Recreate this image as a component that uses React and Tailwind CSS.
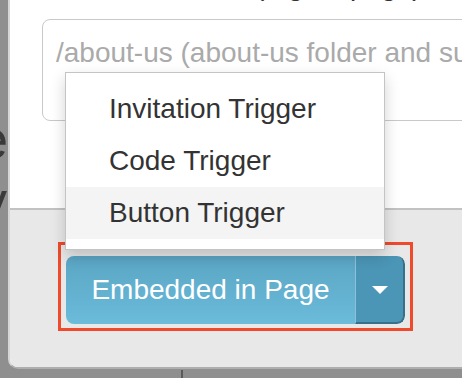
const ITEMS = ["Invitation Trigger", "Code Trigger", "Button Trigger"];

export default function App() {
  const font = { fontFamily: '"Liberation Sans", Arial, sans-serif' };

  return (
    <div
      className="relative w-[462px] h-[378px] overflow-hidden bg-[#8f8f8f]"
      style={font}
    >
      {/* page text showing behind the overlay */}
      <span className="absolute left-[-22px] top-[109px] text-[54px] leading-[60px] text-[#3a3a3a]">
        e
      </span>
      <span className="absolute left-[-20px] top-[170px] text-[54px] leading-[60px] text-[#3a3a3a]">
        y
      </span>
      <div className="absolute left-[181px] top-[370px] w-[2px] h-[8px] bg-[#5a5a5a]" />

      {/* Modal */}
      <div className="ml-[8px] w-[520px] h-[369px] flex flex-col bg-white border-l-2 border-b-2 border-l-[#d6d6d6] border-b-[#aeaeae] rounded-bl-[10px] overflow-hidden">
        <div className="h-[208px] shrink-0 bg-white">
          <div className="mt-[-28px] h-[28px] pl-[245px] text-[28px] leading-[28px] text-[#333] whitespace-nowrap">
            (e.g. to page)
          </div>
          <div className="mt-[19px] ml-[32px] h-[102px] border border-[#c9c9c9] rounded-[8px] pt-[13px] pl-[13px] text-[28px] leading-[40px] text-[#aaaaaa] whitespace-nowrap overflow-hidden">
            /about-us (about-us folder and subfolders)
          </div>
        </div>

        {/* Footer */}
        <div className="flex-1 bg-[#e8e8e8] border-t-2 border-[#c2c2c2] pt-[32px] pl-[48px]">
          <div className="w-[355px] h-[89px] border-[3px] border-[#ee4a2b] pt-[11px] pl-[5px]">
            <div className="flex w-[339px] h-[68px] rounded-[8px] overflow-hidden">
              <button className="w-[289px] h-full flex items-center justify-center bg-linear-to-b from-[#5aa5c4] to-[#6bbbda] text-white text-[28px] leading-none">
                Embedded in Page
              </button>
              <button className="w-[50px] h-full flex items-center justify-center bg-[#4b95b6] border-l border-l-[#8cc2d9] border-r-2 border-b-2 border-r-[#386f8a] border-b-[#386f8a] rounded-r-[8px]">
                <svg width="16" height="8" viewBox="0 0 16 8" className="mt-[2px]">
                  <path d="M0 0 L16 0 L8 8 Z" fill="white" />
                </svg>
              </button>
            </div>
          </div>
        </div>
      </div>

      {/* Dropdown menu */}
      <div className="absolute left-[65px] top-[72px] w-[320px] border border-[#c4c4c4] bg-white py-[10px] shadow-[0_6px_14px_rgba(0,0,0,0.18)]">
        {ITEMS.map((item, i) => (
          <div
            key={item}
            className={`h-[52px] pl-[43px] text-[28px] leading-[52px] text-[#333] whitespace-nowrap ${
              i === 2 ? "bg-[#f4f4f4]" : ""
            }`}
          >
            {item}
          </div>
        ))}
      </div>
    </div>
  );
}
